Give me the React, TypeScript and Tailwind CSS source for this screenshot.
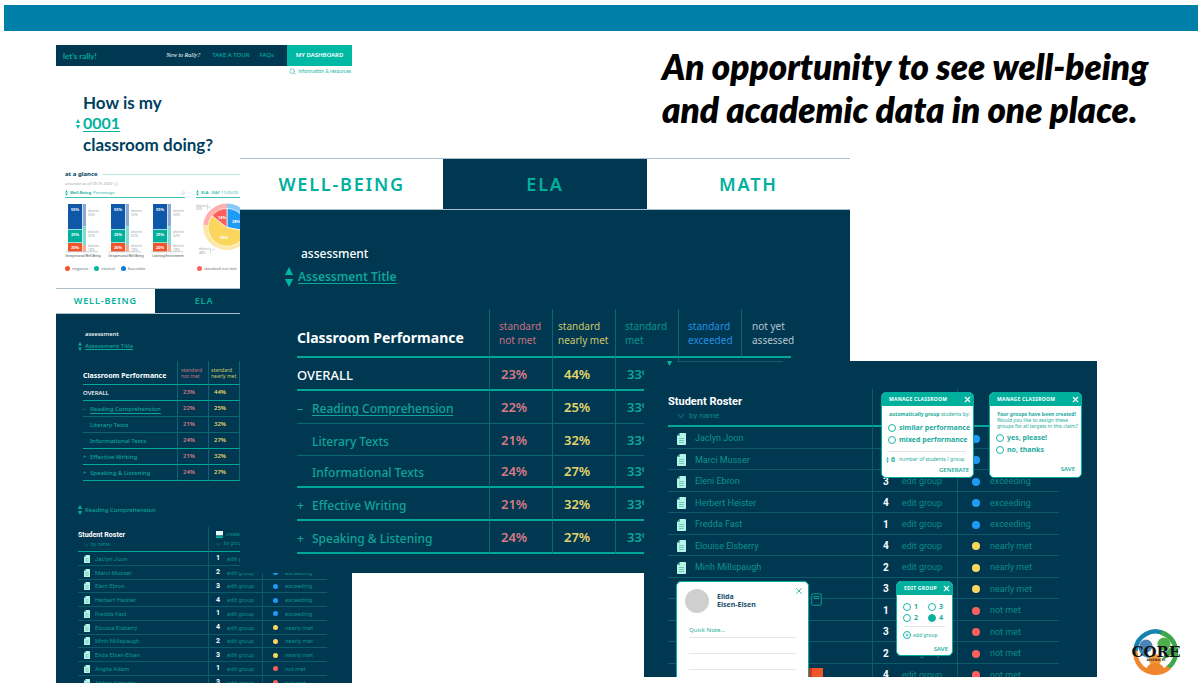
import { Plus, Search, X } from 'lucide-react';

type Size = 'sm' | 'lg';

/* ---------- shared bits ---------- */

function SortIcon({ className }: { className: string }) {
  return (
    <svg viewBox="0 0 8 20" className={className} fill="#00b9a5" aria-hidden="true">
      <path d="M4 0L8 8H0Z" />
      <path d="M4 20L0 12H8Z" />
    </svg>
  );
}

function Caret({ className }: { className: string }) {
  return (
    <svg viewBox="0 0 8 6" className={className} fill="none" stroke="#0a8a86" strokeWidth="0.8" aria-hidden="true">
      <path d="M1 1L4 5L7 1" />
    </svg>
  );
}

function DocIcon({ className }: { className: string }) {
  return (
    <svg viewBox="0 0 9 12" className={className} aria-hidden="true">
      <path d="M3 0H8.2Q9 0 9 .8V11.2Q9 12 8.2 12H.8Q0 12 0 11.2V3Z" fill="#b9f3e6" />
      <path d="M0 3L3 0V3Z" fill="#3fb9ab" />
      <path d="M2 5.5H7M2 7.5H7M2 9.5H7" stroke="#5cc9bb" strokeWidth="0.9" />
    </svg>
  );
}

/* ---------- tabs ---------- */

const tabStyles = {
  sm: 'h-[26px] text-[9px]',
  lg: 'h-[52px] text-[18px]',
};

function Tabs({ size }: { size: Size }) {
  return (
    <nav className={`grid grid-cols-3 border-y border-[#a9bfcb] font-semibold tracking-widest text-[#00b09d] ${tabStyles[size]}`}>
      <a href="#well-being" className="flex items-center justify-center bg-white">WELL-BEING</a>
      <a href="#ela" className="flex items-center justify-center bg-[#003852]">ELA</a>
      <a href="#math" className="flex items-center justify-center bg-white">MATH</a>
    </nav>
  );
}

/* ---------- classroom performance ---------- */

type PerfRow = { name: string; mark: string; notMet: string; nearly: string; heavy: boolean };

const perfRows: PerfRow[] = [
  { name: 'OVERALL', mark: '', notMet: '23%', nearly: '44%', heavy: true },
  { name: 'Reading Comprehension', mark: '–', notMet: '22%', nearly: '25%', heavy: false },
  { name: 'Literary Texts', mark: ' ', notMet: '21%', nearly: '32%', heavy: false },
  { name: 'Informational Texts', mark: ' ', notMet: '24%', nearly: '27%', heavy: true },
  { name: 'Effective Writing', mark: '+', notMet: '21%', nearly: '32%', heavy: true },
  { name: 'Speaking & Listening', mark: '+', notMet: '24%', nearly: '27%', heavy: true },
];

const perfStyles = {
  lg: {
    table: 'w-[494px] text-[13px]',
    first: 'w-[192px]',
    col: 'w-[63px] pl-[9px]',
    nearlyCol: 'w-[63px] pl-[5px]',
    lastCol: 'w-[50px] pl-[10px]',
    head: 'h-[49px] border-b-2 text-[10px] leading-[14px]',
    value: 'pl-[11px] pt-[2px]',
    title: 'text-[14px] pb-[11px]',
    name: 'pt-[4px] text-[12px]',
    overall: 'pt-[4px] text-[13px]',
    mark: 'w-[15px]',
    heavy: 'border-b-2',
    row: 'h-[33px]',
    subRow: 'h-[32px]',
  },
  sm: {
    table: 'w-[157px] text-[6px]',
    first: 'w-[94px]',
    col: 'w-[31px] pl-[3px]',
    nearlyCol: 'w-[32px] pl-[2px] border-r border-r-[#0b6670]',
    lastCol: '',
    head: 'h-[24px] border-b text-[5px] leading-[6px]',
    value: 'pl-[5px]',
    title: 'text-[7px] pb-[5px]',
    name: 'pt-[1px]',
    overall: 'pt-[1px]',
    mark: 'w-[7px]',
    heavy: 'border-b',
    row: 'h-[16px]',
    subRow: 'h-[16px]',
  },
};

function PerformanceTable({ size }: { size: Size }) {
  const s = perfStyles[size];
  const full = size === 'lg';
  const head = `border-l border-l-[#0b6670] border-b-[#00a898] text-left align-middle font-normal whitespace-nowrap ${s.head}`;
  return (
    <table className={`table-fixed border-separate border-spacing-0 ${s.table}`}>
      <thead>
        <tr>
          <th className={`border-b-[#00a898] text-left align-bottom font-bold whitespace-nowrap text-white ${s.first} ${s.head}`}>
            <span className={`block ${s.title}`}>Classroom Performance</span>
          </th>
          <th className={`text-[#c9707f] ${head} ${s.col}`}>standard<br />not met</th>
          <th className={`text-[#cfc667] ${head} ${s.nearlyCol}`}>standard<br />nearly met</th>
          {full && (
            <>
              <th className={`text-[#0a9488] ${head} ${s.col}`}>standard<br />met</th>
              <th className={`text-[#2490e0] ${head} ${s.col}`}>standard<br />exceeded</th>
              <th className={`text-[#b6c6cf] ${head} ${s.lastCol}`}>not yet<br />assessed</th>
            </>
          )}
        </tr>
      </thead>
      <tbody>
        {perfRows.map((row) => {
          const line = row.heavy ? `${s.heavy} border-b-[#00a898]` : 'border-b border-b-[#0b6670]';
          const cell = `border-l border-l-[#0b6670] py-0 font-semibold ${s.value} ${line}`;
          return (
            <tr key={row.name} className={row.mark === ' ' ? s.subRow : s.row}>
              <th className={`py-0 text-left font-medium whitespace-nowrap ${line} ${row.mark ? 'text-[#0fa597]' : 'text-white'}`}>
                <span className={`flex items-center ${row.mark ? s.name : s.overall}`}>
                  {row.mark && <span className={`shrink-0 ${s.mark}`}>{row.mark}</span>}
                  <span className={row.mark === '–' ? 'underline underline-offset-2' : ''}>{row.name}</span>
                </span>
              </th>
              <td className={`text-[#d97a86] ${cell}`}>{row.notMet}</td>
              <td className={`text-[#e6d56c] ${cell} ${full ? '' : 'border-r border-r-[#0b6670]'}`}>{row.nearly}</td>
              {full && (
                <>
                  <td className={`text-[#0fa597] ${cell}`}>33%</td>
                  <td className={cell} />
                  <td className={line} />
                </>
              )}
            </tr>
          );
        })}
      </tbody>
    </table>
  );
}

/* ---------- student roster ---------- */

type Level = 'exceeding' | 'nearly met' | 'not met';

const roster: { name: string; group: number; level: Level }[] = [
  { name: 'Jaclyn Joon', group: 1, level: 'exceeding' },
  { name: 'Marci Musser', group: 2, level: 'exceeding' },
  { name: 'Eleni Ebron', group: 3, level: 'exceeding' },
  { name: 'Herbert Heister', group: 4, level: 'exceeding' },
  { name: 'Fredda Fast', group: 1, level: 'exceeding' },
  { name: 'Elouise Elsberry', group: 4, level: 'nearly met' },
  { name: 'Minh Millspaugh', group: 2, level: 'nearly met' },
  { name: 'Elida Elsen-Elsen', group: 3, level: 'nearly met' },
  { name: 'Angila Adam', group: 1, level: 'not met' },
  { name: 'Abbey Almonte', group: 3, level: 'not met' },
  { name: 'Bruno Baker', group: 2, level: 'not met' },
  { name: 'Carla Cole', group: 4, level: 'not met' },
];

const dotColor: Record<Level, string> = {
  exceeding: 'bg-[#1e9bf5]',
  'nearly met': 'bg-[#fbd65e]',
  'not met': 'bg-[#fb605c]',
};

const rosterStyles = {
  lg: {
    table: 'w-[391px] h-[296px] text-[9px]',
    cols: ['w-[204px]', 'w-[85px]', 'w-[102px]'],
    head: 'h-[38px]',
    headLine: 'border-b-2',
    title: 'pt-[6px] text-[11px] leading-[14px]',
    sort: 'gap-1 pl-[9px] text-[8px] leading-[14px]',
    caret: 'h-[6px] w-[8px]',
    nameCell: 'gap-[9px] pl-[9px] pt-[3px]',
    doc: 'h-[12px] w-[9px]',
    groupCell: 'gap-[13px] pl-[10px] pt-[3px]',
    number: 'text-[10px]',
    levelCell: 'gap-[10px] pl-[14px] pt-[3px]',
    dot: 'size-[8px]',
    create: 'gap-1 pl-[10px] text-[8px] leading-[14px]',
  },
  sm: {
    table: 'w-[249px] h-[190px] text-[6px]',
    cols: ['w-[130px]', 'w-[54px]', 'w-[65px]'],
    head: 'h-[25px]',
    headLine: 'border-b',
    title: 'pt-[4px] text-[7px] leading-[9px]',
    sort: 'gap-[2px] pl-[6px] text-[5px] leading-[9px]',
    caret: 'h-[4px] w-[5px]',
    nameCell: 'gap-[5px] pl-[6px] pt-px',
    doc: 'h-[8px] w-[6px]',
    groupCell: 'gap-[7px] pl-[7px] pt-px',
    number: 'text-[7px]',
    levelCell: 'gap-[7px] pl-[10px] pt-px',
    dot: 'size-[5px]',
    create: 'gap-[3px] pl-[7px] text-[5px] leading-[9px]',
  },
};

function RosterTable({ size, count }: { size: Size; count: number }) {
  const s = rosterStyles[size];
  const head = `${s.headLine} border-b-[#00a898] text-left align-top font-normal text-[#0a8a86] ${s.head}`;
  const line = 'border-b border-b-[#0b5c68] p-0';
  return (
    <table className={`table-fixed border-separate border-spacing-0 leading-none whitespace-nowrap ${s.table}`}>
      <thead>
        <tr>
          <th className={`${head} ${s.cols[0]}`}>
            <span className={`block font-bold text-white ${s.title}`}>Student Roster</span>
            <button className={`flex items-center ${s.sort}`}>
              <Caret className={s.caret} />
              by name
            </button>
          </th>
          <th className={`border-l border-l-[#0b5c68] pt-[3px] ${head} ${s.cols[1]}`}>
            <button className={`flex items-center ${s.create}`}>
              <svg viewBox="0 0 8 8" className="size-[7px]" aria-hidden="true">
                <path d="M0 0H8V5H0Z" fill="#e9fffb" />
                <path d="M0 6H8V8H0Z" fill="#00b9a5" />
              </svg>
              create
            </button>
            <button className={`flex items-center ${s.create}`}>
              <Caret className={s.caret} />
              by group
            </button>
          </th>
          <th className={`border-l border-l-[#0b5c68] ${head} ${s.cols[2]}`} />
        </tr>
      </thead>
      <tbody>
        {roster.slice(0, count).map((r) => (
          <tr key={r.name} className="text-[#0b9489]">
            <td className={line}>
              <span className={`flex items-center ${s.nameCell}`}>
                <DocIcon className={s.doc} />
                {r.name}
              </span>
            </td>
            <td className={`border-l border-l-[#0b5c68] ${line}`}>
              <span className={`flex items-center ${s.groupCell}`}>
                <b className={`text-white ${s.number}`}>{r.group}</b>
                <button className="text-[#0a8c86]">edit group</button>
              </span>
            </td>
            <td className={`border-l border-l-[#0b5c68] ${line}`}>
              <span className={`flex items-center text-[#0a8c86] ${s.levelCell}`}>
                <i className={`rounded-full ${s.dot} ${dotColor[r.level]}`} />
                {r.level}
              </span>
            </td>
          </tr>
        ))}
      </tbody>
    </table>
  );
}

/* ---------- at-a-glance charts ---------- */

const barGroups = [
  { x: 3, label: 'Interpersonal Well-Being' },
  { x: 46, label: 'Intrapersonal Well-Being' },
  { x: 88, label: 'Learning Environment' },
];

function BarChart() {
  return (
    <svg viewBox="0 0 124 58" className="h-[58px] w-[124px] overflow-visible" fontFamily="Noto Sans, sans-serif">
      {barGroups.map((g) => (
        <g key={g.label} transform={`translate(${g.x} 0)`}>
          <path d="M0 3H14V28H0Z" fill="#0f57a8" />
          <path d="M0 28.6H14V41.4H0Z" fill="#00b09d" />
          <path d="M0 42H14V50.5H0Z" fill="#f0562b" />
          <path d="M14.6 3H18V25.5H14.6Z" fill="#8aaad2" />
          <path d="M14.6 25.5H18V44H14.6Z" fill="#80dccf" />
          <path d="M14.6 44H18V50.5H14.6Z" fill="#f7ab95" />
          <path d="M-2 50.8H30" stroke="#9aa3aa" strokeWidth="0.5" />
          <g fill="#fff" fontSize="4" fontWeight="700" textAnchor="middle">
            <text x="7" y="9.5">55%</text>
            <text x="7" y="35">25%</text>
            <text x="7" y="48">20%</text>
          </g>
          <g fill="#9aa3aa" fontSize="3.4">
            <text x="20" y="11">district</text>
            <text x="20" y="15">50%</text>
            <text x="20" y="32">district</text>
            <text x="20" y="36">32%</text>
            <text x="20" y="46">district</text>
            <text x="20" y="50">18%</text>
          </g>
          <text x="15" y="55.5" fill="#333f48" fontSize="3" textAnchor="middle">{g.label}</text>
        </g>
      ))}
    </svg>
  );
}

function PieChart() {
  return (
    <svg viewBox="0 0 62 58" className="h-[58px] w-[62px] overflow-visible" fontFamily="Noto Sans, sans-serif">
      <path d="M31 26.5V2.5A24 24 0 0 1 54.9 28.5Z" fill="#86c8fa" />
      <path d="M31 26.5L54.9 28.5A24 24 0 0 1 7.2 23.5Z" fill="#fde7a6" />
      <path d="M31 26.5L7.2 23.5A24 24 0 0 1 31 2.5Z" fill="#fdaead" />
      <g stroke="#fff" strokeWidth="0.7">
        <path d="M31 26.5V7.500A19 19 0 0 1 49.700 30Z" fill="#1e9bf5" />
        <path d="M31 26.5L49.7 30A19 19 0 1 1 16 14.800Z" fill="#fbd65e" />
        <path d="M31 26.5L16 14.8A19 19 0 0 1 31 7.500Z" fill="#fb605c" />
      </g>
      <g fill="#fff" fontSize="4" fontWeight="700" textAnchor="middle">
        <text x="26" y="18">14%</text>
        <text x="40" y="22">28%</text>
        <text x="28" y="38">58%</text>
      </g>
      <g fill="#9aa3aa" fontSize="3.2">
        <text x="0" y="5.500">district</text>
        <text x="0" y="9">20%</text>
        <text x="3" y="49">district</text>
        <text x="3" y="52.500">48%</text>
      </g>
      <path d="M11.500 3V9M11.500 6H15M14.500 47V52M14.500 49.500L19 48" stroke="#b5bcc1" strokeWidth="0.500" fill="none" />
    </svg>
  );
}

function Legend({ items }: { items: { label: string; dot: string }[] }) {
  return (
    <ul className="flex items-center gap-[6px] text-[4px] whitespace-nowrap text-[#66737c]">
      {items.map((i) => (
        <li key={i.label} className="flex items-center gap-[2px]">
          <i className={`size-[5px] shrink-0 rounded-full ${i.dot}`} />
          {i.label}
        </li>
      ))}
    </ul>
  );
}

/* ---------- windows ---------- */

function DashboardWindow() {
  return (
    <section className="absolute top-[45px] bottom-0 left-[56px] flex w-[296px] flex-col overflow-hidden bg-white">
      <nav className="flex h-[21px] shrink-0 items-center bg-[#003852] text-[6px] font-medium text-[#00a898]">
        <a href="#home" className="flex-1 pl-[7px] font-[Lato] text-[8px] font-bold">let’s rally!</a>
        <a href="#new" className="pr-[12px] font-['Liberation_Serif'] font-normal text-white italic">New to Rally?</a>
        <a href="#tour" className="pr-[10px]">TAKE A TOUR</a>
        <a href="#faqs" className="pr-[13px]">FAQs</a>
        <a href="#dashboard" className="flex h-full w-[65px] items-center justify-center bg-[#00b9a5] font-semibold text-white">
          MY DASHBOARD
        </a>
      </nav>
      <a href="#info" className="flex h-[11px] shrink-0 items-center justify-end gap-[2px] pr-[1px] font-[Lato] text-[5px] text-[#1cb5a5]">
        <Search className="size-[7px]" />
        information &amp; resources
      </a>

      <h1 className="mt-[15px] pl-[27px] font-[Lato] text-[17px] leading-[21px] font-bold text-[#003f5f]">
        How is my
        <span className="-ml-[7px] flex h-[21px] items-center gap-[3px] text-[#00b39f]">
          <SortIcon className="h-[10px] w-[4px]" />
          <button className="border-b border-[#00b39f] text-[16px] leading-[16px] font-bold">0001</button>
        </span>
        classroom doing?
      </h1>

      <div className="mt-[14px] pl-[9px]">
        <h2 className="flex h-[10px] items-center gap-[4px] text-[6px] font-bold text-[#003f5f]">
          at a glance
          <span className="h-px flex-1 bg-[#bdeae4]" />
        </h2>
        <p className="h-[9px] text-[4px] leading-[9px] text-[#99a3aa]">accurate as of 09.15.2020 ⓘ</p>
        <div className="flex gap-[11px]">
          <div className="w-[120px] shrink-0">
            <h3 className="flex h-[10px] items-center gap-[2px] border-b border-[#3cc3b4] text-[4px] text-[#1cb5a5]">
              <SortIcon className="h-[6px] w-[3px]" />
              <b>Well-Being</b> Percentage
              <span className="ml-auto text-[#99a3aa]">ⓘ</span>
            </h3>
            <div className="pt-[3px]">
              <BarChart />
            </div>
          </div>
          <div className="w-[140px] shrink-0">
            <h3 className="flex h-[10px] items-center gap-[2px] border-b border-[#3cc3b4] text-[4px] text-[#1cb5a5]">
              <SortIcon className="h-[6px] w-[3px]" />
              <b>ELA:</b> MAP 11/25/20
            </h3>
            <div className="pt-[3px]">
              <PieChart />
            </div>
          </div>
        </div>
        <div className="flex h-[19px] gap-[12px]">
          <div className="flex w-[120px] shrink-0">
            <Legend
              items={[
                { label: 'negative', dot: 'bg-[#f0562b]' },
                { label: 'neutral', dot: 'bg-[#00b9a5]' },
                { label: 'favorable', dot: 'bg-[#0b7bd8]' },
              ]}
            />
          </div>
          <Legend
            items={[
              { label: 'standard not met', dot: 'bg-[#fb605c]' },
              { label: 'nearly met', dot: 'bg-[#fbd65e]' },
            ]}
          />
        </div>
      </div>

      <div className="mt-[10px] flex-1">
        <Tabs size="sm" />
        <div className="h-full bg-[#003852] pt-[15px] pl-[22px]">
          <p className="pl-[7px] text-[6px] leading-[11px] font-medium text-white">assessment</p>
          <button className="flex h-[12px] items-center gap-[3px] text-[6px] font-medium text-[#0fa597]">
            <SortIcon className="h-[9px] w-[4px]" />
            <span className="underline">Assessment Title</span>
          </button>
          <div className="mt-[9px] pl-[5px]">
            <PerformanceTable size="sm" />
          </div>
          <button className="mt-[23px] flex h-[12px] items-center gap-[3px] text-[6px] font-medium text-[#0fa597]">
            <SortIcon className="h-[10px] w-[4px]" />
            Reading Comprehension
          </button>
          <div className="mt-[11px] font-[Roboto]">
            <RosterTable size="sm" count={12} />
          </div>
        </div>
      </div>
    </section>
  );
}

function PerformanceWindow() {
  return (
    <section className="absolute top-[158px] left-[240px] h-[415px] w-[610px] overflow-hidden bg-[#003852]">
      <Tabs size="lg" />
      <div className="pt-[33px] pl-[45px]">
        <p className="pl-[16px] text-[12px] leading-[22px] font-medium text-white">assessment</p>
        <button className="flex h-[24px] items-center gap-[5px] text-[12px] font-semibold text-[#0fa597]">
          <SortIcon className="h-[22px] w-[8px]" />
          <span className="underline underline-offset-2">Assessment Title</span>
        </button>
        <div className="mt-[20px] pl-[12px]">
          <PerformanceTable size="lg" />
        </div>
      </div>
    </section>
  );
}

function Radio({ name, label, checked }: { name: string; label: string; checked?: boolean }) {
  return (
    <label className="flex items-center gap-[3px]">
      <input
        type="radio"
        name={name}
        defaultChecked={checked}
        className="size-[8px] shrink-0 appearance-none rounded-full border border-[#1cb5a5] checked:bg-[#00b09d]"
      />
      {label}
    </label>
  );
}

function PopupTitle({ children }: { children: string }) {
  return (
    <header className="flex h-[13px] shrink-0 items-center justify-between bg-[#00b09d] pr-px pl-[7px] text-[5px] font-bold tracking-wider text-white">
      {children}
      <button type="button" aria-label="Close">
        <X className="size-[9px]" strokeWidth={3} />
      </button>
    </header>
  );
}

function RosterWindow() {
  const popup = 'absolute flex flex-col overflow-hidden rounded-[5px] border border-[#00b09d] bg-white text-[#1cab9c]';
  return (
    <section className="absolute top-[361px] left-[644px] h-[316px] w-[453px] overflow-hidden bg-[#003852]">
      <div className="flex h-[28px] items-start gap-[5px] pl-[23px]">
        <svg viewBox="0 0 5 5" className="size-[5px]" fill="#00b9a5" aria-hidden="true">
          <path d="M0 0H5L2.5 5Z" />
        </svg>
        <span className="h-px w-[106px] bg-[#1b5a68]" />
      </div>
      <div className="pl-[24px] font-[Roboto]">
        <RosterTable size="lg" count={12} />
      </div>

      <form className={`${popup} top-[31px] left-[237px] h-[86px] w-[93px]`}>
        <PopupTitle>MANAGE CLASSROOM</PopupTitle>
        <p className="pt-[4px] pl-[7px] text-[5px] leading-[8px] whitespace-nowrap"><b>automatically group</b> students by:</p>
        <div className="flex flex-col gap-[2px] pt-[5px] pl-[6px] text-[7px] leading-[10px] font-bold whitespace-nowrap">
          <Radio name="grouping" label="similar performance" />
          <Radio name="grouping" label="mixed performance" />
        </div>
        <div className="mx-[7px] mt-[6px] h-px bg-[#dfe6e8]" />
        <div className="flex items-center gap-[2px] pt-[3px] pl-[4px] text-[5px] leading-[9px]">
          <SortIcon className="h-[6px] w-[3px]" />
          <b className="text-[7px]">6</b>
          <span className="pl-[2px]">number of students / group</span>
        </div>
        <button type="button" className="mt-[2px] mr-[4px] self-end text-[6px] leading-[9px] font-semibold">GENERATE</button>
      </form>

      <form className={`${popup} top-[31px] left-[345px] h-[86px] w-[93px]`}>
        <PopupTitle>MANAGE CLASSROOM</PopupTitle>
        <p className="pt-[5px] pl-[7px] text-[5px] leading-[6px] whitespace-nowrap">
          <b>Your groups have been created!</b>
          <br />Would you like to assign these
          <br />groups for all targets in this claim?
        </p>
        <div className="flex flex-col gap-[2px] pt-[4px] pl-[6px] text-[7px] leading-[10px] font-bold">
          <Radio name="assign" label="yes, please!" />
          <Radio name="assign" label="no, thanks" />
        </div>
        <button type="button" className="mt-auto mr-[6px] mb-[3px] self-end text-[6px] leading-[9px] font-semibold">SAVE</button>
      </form>

      <form className={`${popup} top-[220px] left-[252px] h-[75px] w-[57px]`}>
        <PopupTitle>EDIT GROUP</PopupTitle>
        <div className="grid grid-cols-2 gap-x-[4px] gap-y-[1px] pt-[7px] pr-[3px] pl-[6px] text-[7px] leading-[10px] font-bold">
          <Radio name="group" label="1" />
          <Radio name="group" label="3" />
          <Radio name="group" label="2" />
          <Radio name="group" label="4" checked />
        </div>
        <div className="mx-[7px] mt-[3px] h-px bg-[#dfe6e8]" />
        <button type="button" className="flex items-center gap-[2px] pt-[4px] pl-[6px] text-[5px] leading-[8px]">
          <span className="rounded-full border border-[#1cb5a5] p-px">
            <Plus className="size-[4px]" strokeWidth={4} />
          </span>
          add group
        </button>
        <button type="button" className="mt-auto mr-[4px] mb-[1px] self-end text-[6px] leading-[9px] font-semibold">SAVE</button>
      </form>

      <form className={`${popup} top-[220px] left-[32px] h-[110px] w-[133px]`}>
        <div className="flex items-start gap-[8px] pt-[7px] pr-[4px] pl-[8px]">
          <span className="size-[24px] rounded-full bg-[#cfcfcf]" />
          <p className="flex-1 pt-[4px] text-[7px] leading-[8px] font-bold text-[#22506b]">Elida<br />Elsen-Elsen</p>
          <button type="button" aria-label="Close" className="-mt-[3px]">
            <X className="size-[10px]" />
          </button>
        </div>
        <div className="px-[12px] pt-[12px]">
          <input
            aria-label="Quick Note"
            placeholder="Quick Note..."
            className="block h-[13px] w-full border-b border-[#e3e8ea] pb-[2px] text-[6px] placeholder:text-[#1cab9c]"
          />
          <div className="h-[16px] border-b border-[#e3e8ea]" />
          <div className="h-[16px] border-b border-[#e3e8ea]" />
        </div>
      </form>
      <svg viewBox="0 0 11 13" className="absolute top-[232px] left-[167px] h-[13px] w-[11px]" aria-hidden="true">
        <rect x="0.75" y="0.75" width="9.500" height="11.500" rx="1" fill="#003852" stroke="#0a9a90" />
        <path d="M3 3.500H8V5.500H3Z" fill="none" stroke="#0fa597" strokeWidth="0.9" />
      </svg>
      <span className="absolute bottom-0 left-[165px] h-[9px] w-[14px] border-l-[3px] border-[#d8321f] bg-[#f0562b]" />
    </section>
  );
}

function CoreLogo() {
  return (
    <svg viewBox="0 0 50 46" className="absolute right-[19px] bottom-[8px] h-[46px] w-[50px]" role="img" aria-label="CORE Districts">
      <g fill="none" strokeWidth="4.5">
        <path d="M4.500 22A20 20 0 0 1 35 5.500" stroke="#1583ad" />
        <path d="M30 3.500A20 20 0 0 1 36 39.500" stroke="#3da648" />
        <path d="M38 38.500A20 20 0 0 1 4.500 22" stroke="#f0862b" />
      </g>
      <circle cx="15" cy="17" r="6.500" fill="#4a83b5" />
      <circle cx="33" cy="15" r="6.500" fill="#4fae4b" />
      <path d="M7 17Q15 21 20 30L12 27Q8 24 7 17Z" fill="#3b7fae" />
      <path d="M42 17Q35 20 31 31L38 28Q42 24 42 17Z" fill="#3da648" />
      <circle cx="24" cy="31" r="6" fill="#f39a3c" />
      <path d="M15 42Q16 34 24 34T34 42Q24 46 15 42Z" fill="#f0862b" />
      <text x="25" y="27.500" fontFamily="DejaVu Serif, serif" fontWeight="700" fontSize="15" textAnchor="middle" fill="#111">CORE</text>
      <text x="25" y="31.500" fontFamily="DejaVu Serif, serif" fontWeight="700" fontSize="3" textAnchor="middle" fill="#111">DISTRICTS</text>
    </svg>
  );
}

export default function App() {
  return (
    <main className="relative min-h-screen overflow-hidden bg-white font-['Noto_Sans',sans-serif]">
      <div className="mx-[2px] ml-[4px] pt-[5px]">
        <div className="h-[26px] bg-[#007fa8]" />
      </div>
      <h2 className="ml-[55%] pt-[14px] pl-[2px] font-[Lato] text-[35px] leading-[43px] font-extrabold text-black italic">
        An opportunity to see well-being
        <br />
        and academic data in one place.
      </h2>
      <DashboardWindow />
      <PerformanceWindow />
      <RosterWindow />
      <CoreLogo />
    </main>
  );
}
